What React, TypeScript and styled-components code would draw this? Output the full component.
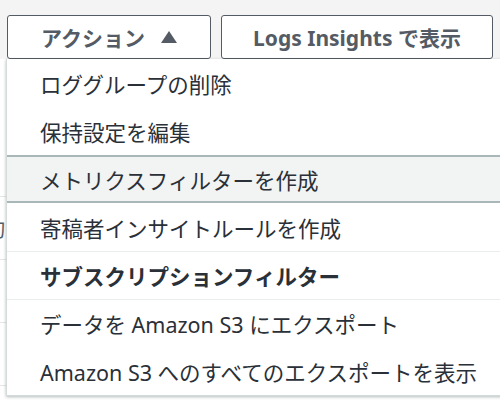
import React from "react";
import styled, { createGlobalStyle } from "styled-components";

const Global = createGlobalStyle`
  html, body { margin: 0; padding: 0; background: #ffffff; }
  body { font-family: "Noto Sans", "Noto Sans CJK JP", sans-serif; }
`;

const Page = styled.div`
  position: relative;
  width: 500px;
  height: 402px;
  overflow: hidden;
  background: #ffffff;
`;

const Toolbar = styled.div`
  display: flex;
  gap: 10px;
  padding: 15px 7px 0 7px;
  height: 44px;
  background: #f4f4f4;
`;

const Button = styled.button<{ $w: number }>`
  width: ${(p) => p.$w}px;
  height: 44px;
  box-sizing: border-box;
  border: 1px solid #545b64;
  border-radius: 3px;
  background: #ffffff;
  color: #545b64;
  font-family: "Noto Sans", "Noto Sans CJK JP", sans-serif;
  font-weight: 700;
  font-size: 21px;
  display: flex;
  align-items: center;
  justify-content: center;
  gap: 16px;
  padding: 0;
`;

const Table = styled.div`
  display: flex;
  flex-direction: column;
  padding-top: 75px;
`;

const BgRow = styled.div`
  height: 63px;
  box-sizing: border-box;
  border-bottom: 1px solid #e4e7e7;
  font-size: 19px;
  color: #545b64;
  display: flex;
  align-items: center;
`;

const BgText = styled.span`
  margin-left: -13px;
  font-family: "Noto Sans CJK JP", sans-serif;
`;

const Menu = styled.ul`
  position: absolute;
  left: 6px;
  top: 59px;
  width: 520px;
  margin: 0;
  padding: 0;
  list-style: none;
  background: #ffffff;
  border: 1px solid #d5dbdb;
  border-top: none;
  box-shadow: 0 1px 3px rgba(0, 28, 36, 0.3);
`;

const Item = styled.li<{ $hover?: boolean; $bold?: boolean; $sep?: boolean }>`
  height: 48px;
  box-sizing: border-box;
  display: flex;
  align-items: center;
  padding-left: 33px;
  font-size: 21.5px;
  color: #2a3038;
  font-weight: ${(p) => (p.$bold ? 700 : 400)};
  white-space: nowrap;
  background: ${(p) => (p.$hover ? "#f2f3f3" : "transparent")};
  border-top: ${(p) =>
    p.$hover ? "2px solid #aab7b8" : p.$sep ? "1px solid #eaeded" : "1px solid transparent"};
  border-bottom: ${(p) => (p.$hover ? "2px solid #aab7b8" : "1px solid transparent")};
`;

const Caret = () => (
  <svg width="16" height="12" viewBox="0 0 16 12">
    <path d="M8 0 L16 12 L0 12 Z" fill="#545b64" />
  </svg>
);

export default function App() {
  return (
    <Page>
      <Global />
      <Toolbar>
        <Button $w={204}>
          アクション
          <Caret />
        </Button>
        <Button $w={272}>Logs Insights で表示</Button>
      </Toolbar>
      <Table>
        <BgRow />
        <BgRow>
          <BgText>刃</BgText>
        </BgRow>
        <BgRow />
        <BgRow />
      </Table>
      <Menu>
        <Item>ロググループの削除</Item>
        <Item>保持設定を編集</Item>
        <Item $hover>メトリクスフィルターを作成</Item>
        <Item>寄稿者インサイトルールを作成</Item>
        <Item $bold $sep>サブスクリプションフィルター</Item>
        <Item $sep>データを Amazon S3 にエクスポート</Item>
        <Item>Amazon S3 へのすべてのエクスポートを表示</Item>
      </Menu>
    </Page>
  );
}
